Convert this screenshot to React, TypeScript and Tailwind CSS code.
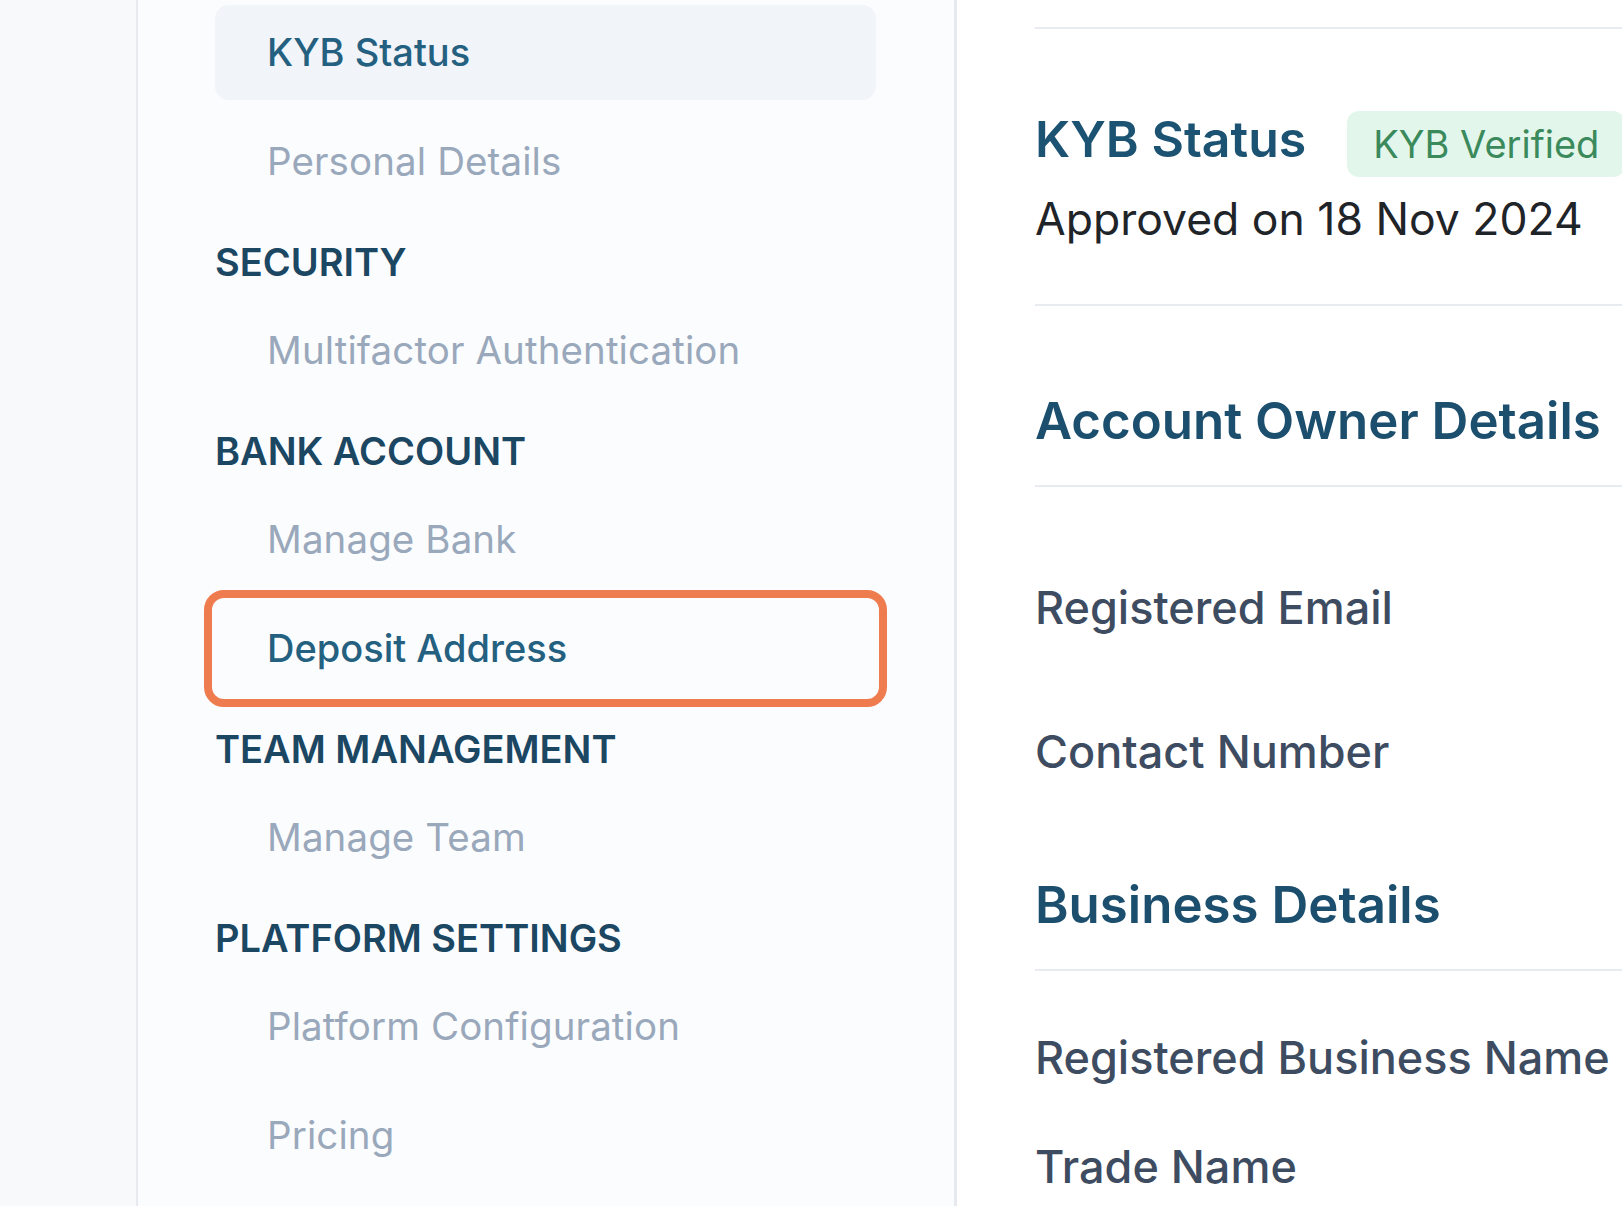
import React from "react";

type NavItem = { label: string; active?: boolean; highlighted?: boolean };
type NavSection = { title?: string; items: NavItem[] };

const sections: NavSection[] = [
  { items: [{ label: "KYB Status", active: true }, { label: "Personal Details" }] },
  { title: "SECURITY", items: [{ label: "Multifactor Authentication" }] },
  {
    title: "BANK ACCOUNT",
    items: [{ label: "Manage Bank" }, { label: "Deposit Address", highlighted: true }],
  },
  { title: "TEAM MANAGEMENT", items: [{ label: "Manage Team" }] },
  {
    title: "PLATFORM SETTINGS",
    items: [{ label: "Platform Configuration" }, { label: "Pricing" }],
  },
];

function SidebarItem({ item }: { item: NavItem }) {
  const color =
    item.active || item.highlighted
      ? "text-[#24607f] font-medium text-[38px]"
      : "text-[#9aa8bb] text-[38.5px] tracking-[0.1px]";
  return (
    <div
      className={`relative flex h-[95px] items-center rounded-[14px] pl-[52px] ${color} ${
        item.active ? "bg-[#f1f4f8]" : ""
      }`}
    >
      {item.label}
      {item.highlighted && (
        <div className="pointer-events-none absolute -inset-[11px] rounded-[20px] border-[8px] border-[#ee7c4e]" />
      )}
    </div>
  );
}

function Sidebar() {
  return (
    <aside className="flex w-[821px] shrink-0 flex-col gap-[27px] border-l-2 border-r-[3px] border-l-[#e7eaef] border-r-[#e6e9ee] bg-[#fbfcfe] pl-[77px] pr-[78px] pt-[5px]">
      {sections.map((s, i) => (
        <div key={i} className="flex flex-col gap-[14px]">
          {s.title && (
            <div className="flex h-[53px] items-center text-[38px] font-semibold text-[#1b4763]">
              {s.title}
            </div>
          )}
          {s.items.map((it) => (
            <SidebarItem key={it.label} item={it} />
          ))}
        </div>
      ))}
    </aside>
  );
}

function Divider() {
  return <div className="h-[2px] w-full bg-[#e8ecf1]" />;
}

function SectionTitle({ children }: { children: React.ReactNode }) {
  return (
    <h2 className="flex h-[60px] items-center whitespace-nowrap text-[51px] font-semibold text-[#1c4f6e]">
      {children}
    </h2>
  );
}

function FieldLabel({ children, className = "" }: { children: React.ReactNode; className?: string }) {
  return (
    <div className={`flex h-[53px] items-center whitespace-nowrap text-[45px] font-medium text-[#3e4c61] ${className}`}>
      {children}
    </div>
  );
}

export default function App() {
  return (
    <div
      className="flex h-[1206px] w-full overflow-hidden bg-white"
      style={{ fontFamily: "Inter, 'Noto Sans', sans-serif" }}
    >
      <div className="w-[136px] shrink-0 bg-[#f8f9fb]" />
      <Sidebar />

      <main className="flex min-w-0 flex-1 flex-col pl-[78px]">
        <div className="h-[27px]" />
        <div className="w-[800px]">
          <Divider />
        </div>

        {/* KYB status */}
        <div className="flex h-[275px] w-[800px] flex-col pt-[82px]">
          <div className="flex h-[66px] items-center gap-[41px]">
            <h2 className="mb-[10px] whitespace-nowrap text-[50px] font-semibold text-[#1d5372]">
              KYB Status
            </h2>
            <span className="flex h-[66px] shrink-0 items-center whitespace-nowrap rounded-[12px] bg-[#e3f6ec] px-[26px] text-[38px] text-[#3b8a5c]">
              KYB Verified
            </span>
          </div>
          <div className="mt-[16px] flex h-[53px] items-center whitespace-nowrap text-[44.5px] text-[#1f2429]">
            Approved on 18 Nov 2024
          </div>
        </div>
        <div className="w-[800px]">
          <Divider />
        </div>

        {/* Account owner */}
        <div className="pb-[34px] pt-[85px]">
          <SectionTitle>Account Owner Details</SectionTitle>
        </div>
        <div className="w-[800px]">
          <Divider />
        </div>
        <FieldLabel className="mt-[94px]">Registered Email</FieldLabel>
        <FieldLabel className="mt-[91px]">Contact Number</FieldLabel>

        {/* Business */}
        <div className="pb-[34px] pt-[97px]">
          <SectionTitle>Business Details</SectionTitle>
        </div>
        <div className="w-[800px]">
          <Divider />
        </div>
        <FieldLabel className="mt-[60px]">Registered Business Name</FieldLabel>
        <FieldLabel className="mt-[56px]">Trade Name</FieldLabel>
      </main>
    </div>
  );
}
